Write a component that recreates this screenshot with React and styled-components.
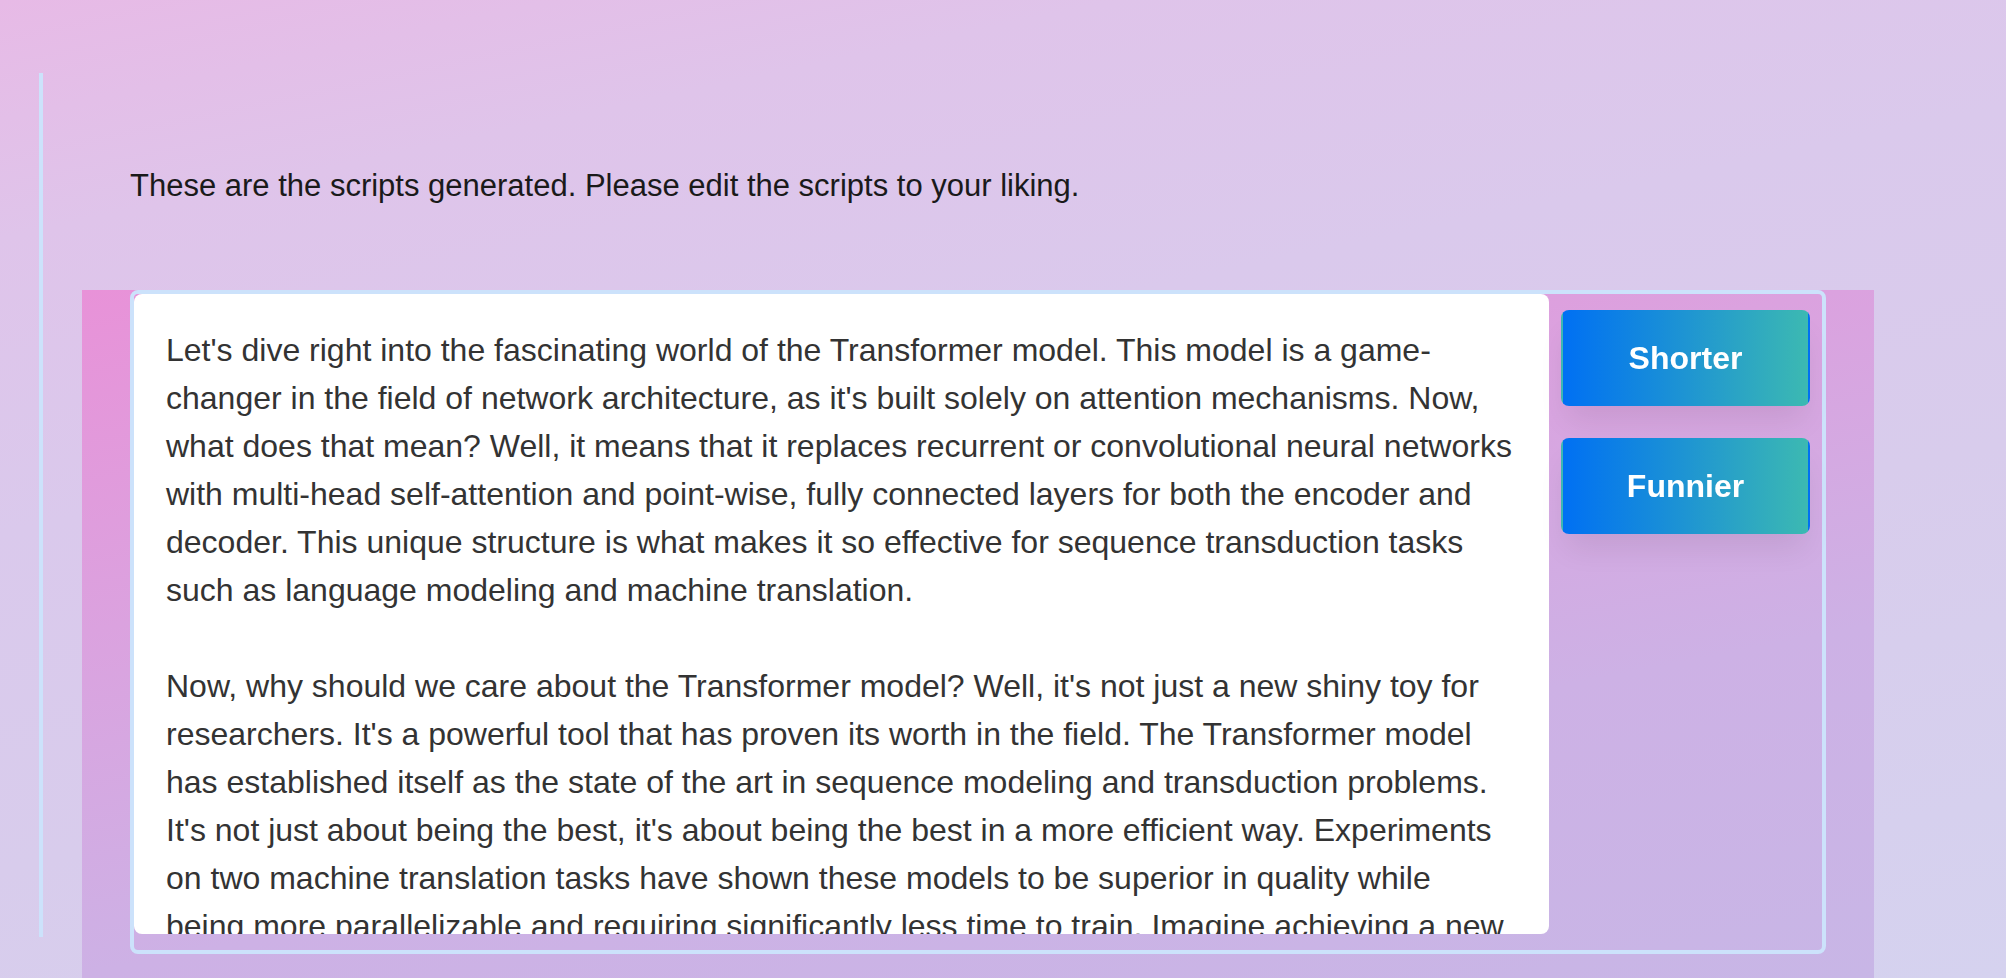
import React, { useState } from 'react';
import styled, { createGlobalStyle } from 'styled-components';

const GlobalStyle = createGlobalStyle`
  *, *::before, *::after { box-sizing: border-box; }
  body {
    margin: 0;
    font-family: 'Liberation Sans', Helvetica, Arial, sans-serif;
    font-size: 32px;
    line-height: 48px;
  }
`;

const Page = styled.div`
  display: flex;
  gap: 39px;
  min-height: 100vh;
  padding: 73px 132px 0 39px;
  background: linear-gradient(168deg, #e7bae6 0%, #dfc4ea 17%, #dac9ec 38%, #d8ccec 62%, #d5d2ef 100%);
`;

const Rule = styled.div`
  flex: 0 0 4px;
  margin-bottom: 41px;
  background: #cce2fb;
`;

const Content = styled.main`
  display: flex;
  flex: 1;
  flex-direction: column;
  min-width: 0;
`;

const Intro = styled.p`
  margin: 0;
  padding: 89px 48px 80px;
  color: #1a1a1a;
  font-size: 31px;
`;

const Panel = styled.section`
  flex: 1;
  padding: 0 48px 24px;
  background: linear-gradient(169deg, #e892d8 0%, #dba2df 33%, #cdb1e5 66%, #c8b6e6 100%);
`;

const Editor = styled.div`
  display: flex;
  padding-bottom: 16px;
  border: 4px solid #cce2fb;
  border-radius: 8px;
`;

const Script = styled.textarea`
  display: block;
  flex: 1;
  min-width: 0;
  height: 640px;
  padding: 32px;
  border: 0;
  border-radius: 8px;
  outline: 0;
  resize: none;
  background: #fff;
  color: #333;
  font: inherit;
  scrollbar-width: none;
`;

const Actions = styled.div`
  display: flex;
  flex: 0 0 273px;
  flex-direction: column;
  gap: 32px;
  padding: 16px 12px;
`;

const ActionButton = styled.button`
  height: 96px;
  padding: 0 32px;
  border: 2px solid transparent;
  border-top-width: 0;
  border-bottom-width: 0;
  border-radius: 8px;
  background: linear-gradient(90deg, #0070f3, #3cb9b2);
  box-shadow: 0 20px 30px -6px rgba(0, 0, 0, 0.08);
  color: #fff;
  font: inherit;
  font-weight: 700;
  cursor: pointer;
`;

const initialScript = `Let's dive right into the fascinating world of the Transformer model. This model is a game-changer in the field of network architecture, as it's built solely on attention mechanisms. Now, what does that mean? Well, it means that it replaces recurrent or convolutional neural networks with multi-head self-attention and point-wise, fully connected layers for both the encoder and decoder. This unique structure is what makes it so effective for sequence transduction tasks such as language modeling and machine translation.

Now, why should we care about the Transformer model? Well, it's not just a new shiny toy for researchers. It's a powerful tool that has proven its worth in the field. The Transformer model has established itself as the state of the art in sequence modeling and transduction problems. It's not just about being the best, it's about being the best in a more efficient way. Experiments on two machine translation tasks have shown these models to be superior in quality while being more parallelizable and requiring significantly less time to train. Imagine achieving a new`;

export default function App() {
  const [script, setScript] = useState(initialScript);
  return (
    <>
      <GlobalStyle />
      <Page>
        <Rule />
        <Content>
          <Intro id="script-intro">
            These are the scripts generated. Please edit the scripts to your liking.
          </Intro>
          <Panel>
            <Editor>
              <Script
                aria-labelledby="script-intro"
                spellCheck={false}
                value={script}
                onChange={(event) => setScript(event.target.value)}
              />
              <Actions>
                <ActionButton type="button">Shorter</ActionButton>
                <ActionButton type="button">Funnier</ActionButton>
              </Actions>
            </Editor>
          </Panel>
        </Content>
      </Page>
    </>
  );
}
